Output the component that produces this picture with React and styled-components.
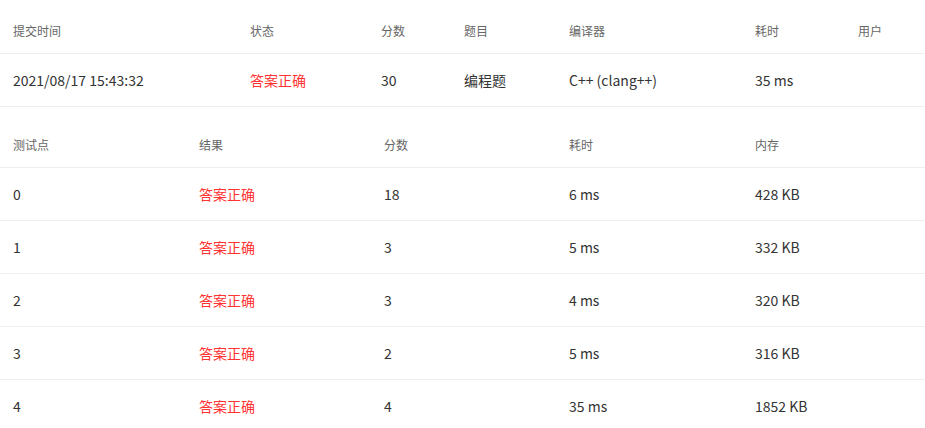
import React from 'react';
import styled, { createGlobalStyle } from 'styled-components';

const GlobalStyle = createGlobalStyle`
  html, body {
    margin: 0;
    padding: 0;
    background: #fff;
  }
  body {
    font-family: "Noto Sans CJK SC", "Noto Sans", sans-serif;
    color: #333;
  }
`;

// DATA
const submission = {
  time: '2021/08/17 15:43:32',
  status: '答案正确',
  score: '30',
  problem: '编程题',
  compiler: 'C++ (clang++)',
  cost: '35 ms',
  user: '',
};

const cases = [
  { id: 0, score: 18, time: '6 ms', mem: '428 KB' },
  { id: 1, score: 3, time: '5 ms', mem: '332 KB' },
  { id: 2, score: 3, time: '4 ms', mem: '320 KB' },
  { id: 3, score: 2, time: '5 ms', mem: '316 KB' },
  { id: 4, score: 4, time: '35 ms', mem: '1852 KB' },
];

const topCols = [237, 131, 83, 105, 186, 103, 80];
const caseCols = [186, 185, 185, 186, 183];

export default function App() {
  return (
    <Page>
      <GlobalStyle />
      <Table>
        <colgroup>
          {topCols.map((w, i) => <col key={i} style={{ width: w }} />)}
        </colgroup>
        <thead>
          <tr>
            <Th>提交时间</Th>
            <Th>状态</Th>
            <Th>分数</Th>
            <Th>题目</Th>
            <Th>编译器</Th>
            <Th>耗时</Th>
            <Th>用户</Th>
          </tr>
        </thead>
        <tbody>
          <tr>
            <Td>{submission.time}</Td>
            <Td $ok>{submission.status}</Td>
            <Td>{submission.score}</Td>
            <Td>{submission.problem}</Td>
            <Td>{submission.compiler}</Td>
            <Td>{submission.cost}</Td>
            <Td>{submission.user}</Td>
          </tr>
        </tbody>
      </Table>

      <CaseTable>
        <colgroup>
          {caseCols.map((w, i) => <col key={i} style={{ width: w }} />)}
        </colgroup>
        <thead>
          <tr>
            <Th>测试点</Th>
            <Th>结果</Th>
            <Th>分数</Th>
            <Th>耗时</Th>
            <Th>内存</Th>
          </tr>
        </thead>
        <tbody>
          {cases.map((c) => (
            <tr key={c.id}>
              <Td>{c.id}</Td>
              <Td $ok>答案正确</Td>
              <Td>{c.score}</Td>
              <Td>{c.time}</Td>
              <Td>{c.mem}</Td>
            </tr>
          ))}
        </tbody>
      </CaseTable>
    </Page>
  );
}

const Page = styled.div`
  width: 925px;
  background: #fff;
`;

const Table = styled.table`
  width: 100%;
  table-layout: fixed;
  border-collapse: collapse;
  border-spacing: 0;
`;

const CaseTable = styled(Table)`
  margin-top: 7px;
`;

const Th = styled.th`
  text-align: left;
  font-weight: normal;
  font-size: 12px;
  line-height: 16px;
  color: #666;
  padding: 23px 13px 14px;
  border-bottom: 1px solid #eee;
  white-space: nowrap;
`;

const Td = styled.td`
  height: 53px;
  box-sizing: border-box;
  padding: 0 13px;
  font-size: 14px;
  line-height: 20px;
  color: ${(p) => (p.$ok ? '#f33' : '#333')};
  border-bottom: 1px solid #eee;
  white-space: nowrap;
  vertical-align: middle;
`;
